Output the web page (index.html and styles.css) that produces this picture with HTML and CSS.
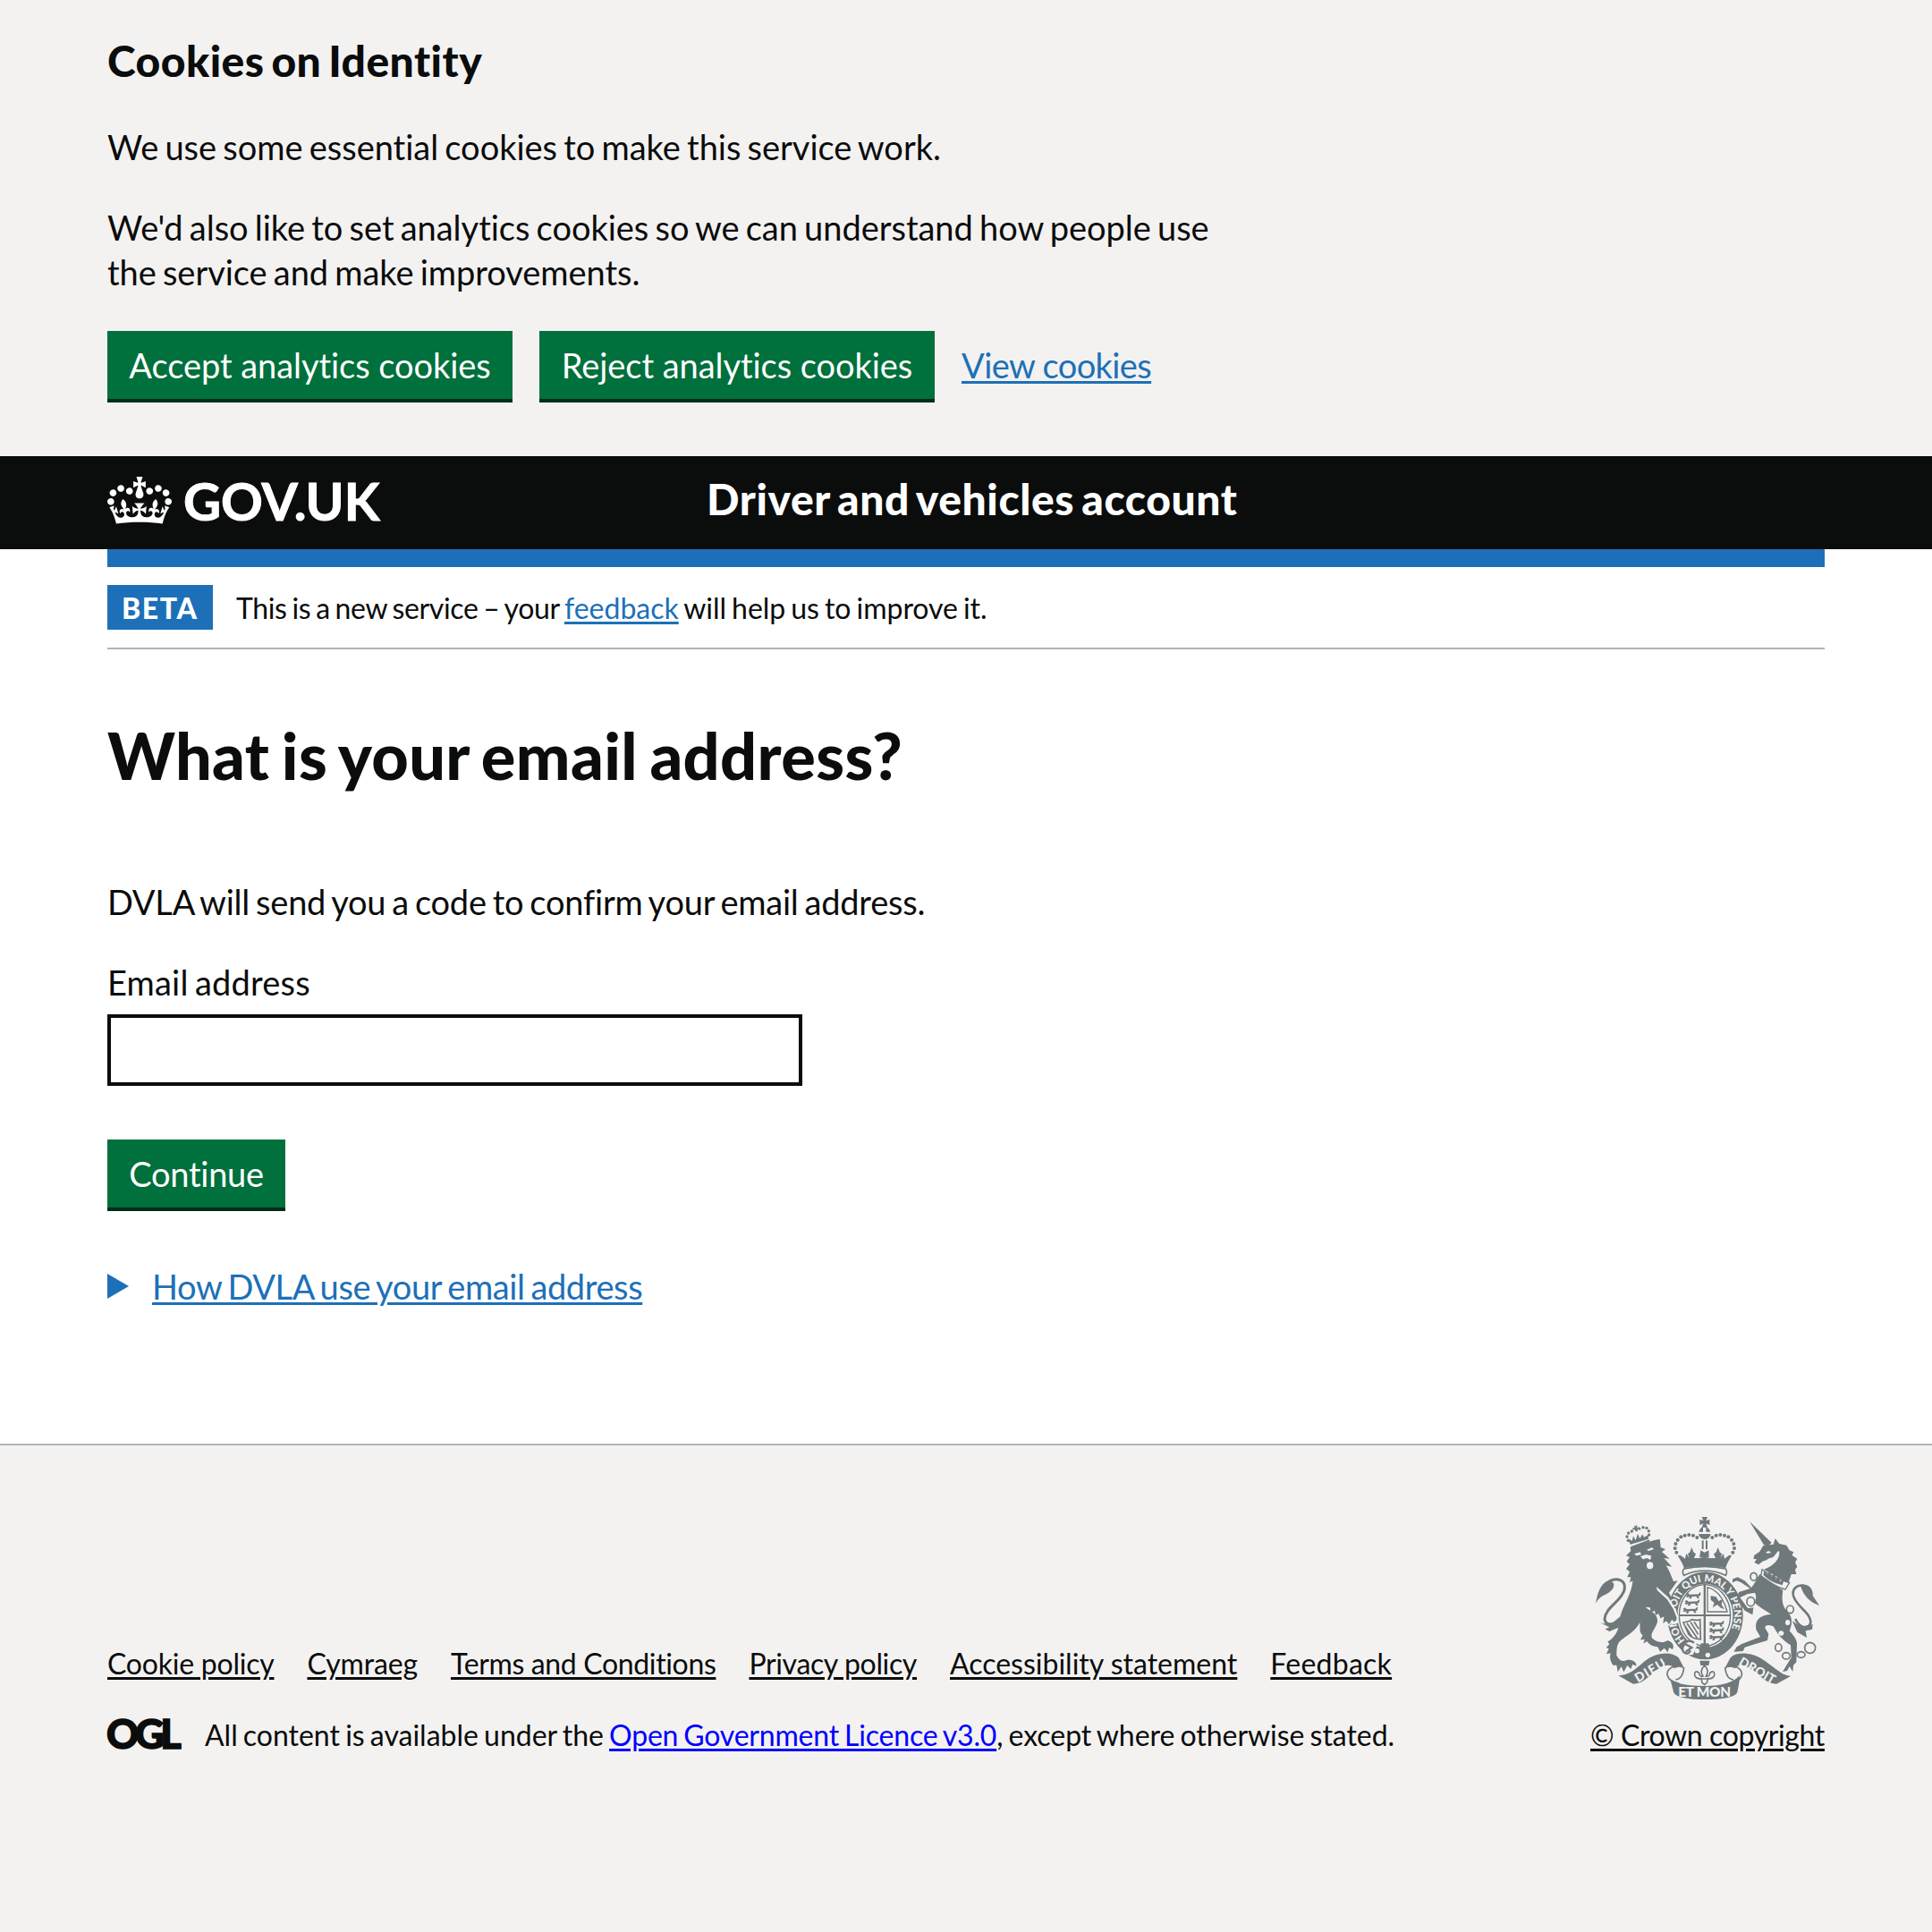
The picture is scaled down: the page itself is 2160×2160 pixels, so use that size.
FILE: index.html
```html
<!DOCTYPE html>
<html lang="en">
<head>
<meta charset="utf-8">
<title>What is your email address?</title>
<link rel="stylesheet" href="styles.css">
</head>
<body>
<section class="cookie-banner" aria-label="Cookies on Identity">
  <div class="container">
    <h2 class="cookie-banner__heading">Cookies on Identity</h2>
    <p class="cookie-banner__text">We use some essential cookies to make this service work.</p>
    <p class="cookie-banner__text">We'd also like to set analytics cookies so we can understand how people use<br><span class="cookie-banner__last">the service and make improvements.</span></p>
    <div class="button-group">
      <button class="button button--accept" type="button">Accept analytics cookies</button>
      <button class="button button--reject" type="button">Reject analytics cookies</button>
      <a class="link button-group__link" href="#">View cookies</a>
    </div>
  </div>
</section>

<header class="header">
  <div class="container header__container">
    <a class="header__logo" href="#">
      <svg class="header__crown" viewBox="0 0 132 97" aria-hidden="true"><path fill="currentColor" fill-rule="evenodd" d="M25 30.2c3.5 1.5 7.7-.2 9.1-3.7 1.5-3.6-.2-7.8-3.9-9.2-3.6-1.4-7.6.3-9.1 3.9-1.4 3.5.3 7.5 3.9 9zM9 39.5c3.6 1.5 7.8-.2 9.2-3.7 1.5-3.6-.2-7.8-3.9-9.1-3.6-1.5-7.6.2-9.1 3.8-1.4 3.5.3 7.5 3.8 9zM4.4 57.2c3.5 1.5 7.7-.2 9.1-3.8 1.5-3.6-.2-7.7-3.9-9.1-3.5-1.5-7.6.3-9.1 3.8-1.4 3.5.3 7.6 3.9 9.1zm38.3-21.4c3.5 1.5 7.7-.2 9.1-3.8 1.5-3.6-.2-7.7-3.9-9.1-3.6-1.5-7.6.3-9.1 3.8-1.3 3.6.4 7.7 3.9 9.1zm64.4-5.6c-3.6 1.5-7.8-.2-9.1-3.7-1.5-3.6.2-7.8 3.8-9.2 3.6-1.4 7.7.3 9.2 3.9 1.3 3.5-.4 7.5-3.9 9zm15.9 9.3c-3.6 1.5-7.7-.2-9.1-3.7-1.5-3.6.2-7.8 3.7-9.1 3.6-1.5 7.7.2 9.2 3.8 1.5 3.5-.3 7.5-3.8 9zm4.7 17.7c-3.6 1.5-7.8-.2-9.2-3.8-1.5-3.6.2-7.7 3.9-9.1 3.6-1.5 7.7.3 9.2 3.8 1.3 3.5-.4 7.6-3.9 9.1zM89.3 35.8c-3.6 1.5-7.8-.2-9.2-3.8-1.4-3.6.2-7.7 3.9-9.1 3.6-1.5 7.7.3 9.2 3.8 1.4 3.6-.3 7.7-3.9 9.1zM69.7 17.7l8.9 4.7V9.3l-8.9 2.8c-.2-.3-.5-.6-.9-.9L72.4 0H59.6l3.5 11.2c-.3.3-.6.5-.9.9l-8.8-2.8v13.1l8.8-4.7c.3.3.6.7.9.9l-5 15.4v.1c-.2.8-.4 1.6-.4 2.4 0 4.1 3.1 7.5 7 8.1h.2c.3 0 .7.1 1 .1.4 0 .7 0 1-.1h.2c4-.6 7.1-4.1 7.1-8.1 0-.8-.1-1.7-.4-2.4V34l-5.1-15.4c.4-.2.7-.6 1-.9zM66 92.8c16.9 0 32.8 1.1 47.1 3.2 4-16.9 8.9-26.7 14-33.5l-9.6-3.4c1 4.9 1.1 7.2 0 10.2-1.5-1.4-3-4.3-4.2-8.7L108.6 76c2.8-2 5-3.2 7.5-3.3-4.4 9.4-10 11.9-13.6 11.2-4.3-.8-6.3-4.6-5.6-7.9 1-4.7 5.7-5.9 8-.5 4.3-8.7-3-11.4-7.6-8.8 7.1-7.2 7.9-13.5 2.1-21.1-8 6.1-8.1 12.3-4.5 20.8-4.7-5.4-12.1-2.5-9.5 6.2 3.4-5.2 7.9-2 7.2 3.1-.6 4.3-6.4 7.8-13.5 7.2-10.3-.9-10.9-8-11.2-13.8 2.5-.5 7.1 1.8 11 7.3L80.2 60c-4.1 4.4-8 5.3-12.3 5.4 1.4-4.4 8-11.6 8-11.6H55.5s6.4 7.2 7.9 11.6c-4.2-.1-8-1-12.3-5.4l1.4 16.4c3.9-5.5 8.5-7.7 10.9-7.3-.3 5.8-.9 12.8-11.1 13.8-7.2.6-12.9-2.9-13.5-7.2-.7-5 3.8-8.3 7.1-3.1 2.7-8.7-4.6-11.6-9.4-6.2 3.7-8.5 3.6-14.7-4.6-20.8-5.8 7.6-5 13.9 2.2 21.1-4.7-2.6-11.9.1-7.7 8.8 2.3-5.5 7.1-4.2 8.1.5.7 3.3-1.3 7.1-5.7 7.9-3.5.7-9-1.8-13.5-11.2 2.5.1 4.7 1.3 7.5 3.3l-4.7-15.4c-1.2 4.4-2.7 7.2-4.3 8.7-1.1-3-.9-5.3 0-10.2l-9.5 3.4c5 6.9 9.9 16.7 14 33.5 14.8-2.1 30.8-3.2 47.7-3.2z"/></svg>
      <span class="header__logotype">GOV.UK</span>
    </a>
    <a class="header__service" href="#">Driver and vehicles account</a>
  </div>
</header>

<div class="container">
  <div class="brand-bar"></div>
  <div class="phase-banner">
    <strong class="phase-banner__tag">BETA</strong>
    <span class="phase-banner__text"><span class="phase-banner__lead">This is a new service – your </span><a class="link" href="#">feedback</a><span class="phase-banner__rest"> will help us to improve it.</span></span>
  </div>
  <main class="main">
    <h1 class="heading">What is your email address?</h1>
    <p class="intro">DVLA will send you a code to confirm your email address.</p>
    <label class="label" for="email">Email address</label>
    <input class="input" id="email" type="email">
    <button class="button button--continue" type="button">Continue</button>
    <div class="details">
      <svg class="details__arrow" viewBox="0 0 24 28" aria-hidden="true"><path fill="currentColor" d="M0 0l24 14L0 28z"/></svg>
      <a class="link details__text" href="#">How DVLA use your email address</a>
    </div>
  </main>
</div>

<footer class="footer">
  <div class="container footer__container">
    <div class="footer__meta">
      <nav class="footer__links">
        <a class="footer__link ls-cookie" href="#">Cookie policy</a>
        <a class="footer__link ls-cymraeg" href="#">Cymraeg</a>
        <a class="footer__link ls-terms" href="#">Terms and Conditions</a>
        <a class="footer__link ls-privacy" href="#">Privacy policy</a>
        <a class="footer__link" href="#">Accessibility statement</a>
        <a class="footer__link ls-feedback" href="#">Feedback</a>
      </nav>
      <div class="licence">
        <span class="licence__logo">OGL</span>
        <span class="licence__text">All content is available under the <a class="licence__link" href="#">Open Government Licence v3.0</a><span class="licence__rest">, except where otherwise stated.</span></span>
      </div>
    </div>
    <div class="copyright">
      <svg class="copyright__crest" viewBox="72 48 750 612" aria-hidden="true">
        <defs>
          <path id="motto" d="M372 462A98 113 0 1 1 503 463"/>
          <g id="passant"><path d="M0 4l8-4 5 5 30-1 4-6 4 2-3 10-6 1 4 7h-7l-4-7-14 1-3 7h-7l2-8-7 4-6-4 5-3z"/></g>
        </defs>
        <g class="crest-ink">
          <!-- lion -->
          <path d="M188 150L268 126 287 122 290 150 306 156 294 165 320 188 301 186 328 215 308 211C318 225 325 245 333 264L347 262 318 302 338 342 348 372 350 396 338 400 328 392 318 408 309 397 298 404 301 382 290 388 283 372 273 377 270 362 256 368 255 352 238 350C262 368 281 372 279 400 272 425 252 440 262 455 280 470 300 472 312 462 330 466 337 480 330 492L318 486 314 502 302 488 288 500 280 484C262 482 250 475 245 465L232 472 236 458 222 460 230 445C216 435 222 420 220 402 205 430 180 445 165 455 140 470 143 490 142 512 150 530 165 535 175 528 195 525 210 535 208 548L196 542 190 558 178 546 166 568 158 550 146 568 142 545 130 545C120 530 118 515 122 505L108 508 116 490 107 486 118 475 112 466C125 460 140 445 148 420 150 390 158 365 168 345 185 310 195 285 196 262L186 268 190 250 178 250 186 232 174 222 186 206 176 198 186 182 174 178 190 162z"/>
          <path d="M72 338C78 300 90 268 118 260 138 266 138 285 118 300 105 310 85 312 72 338z"/>
          <path class="line" stroke-width="9" d="M116 264C145 250 175 260 168 292 160 330 105 350 102 390 104 412 130 415 158 388"/>
          <path d="M88 403L120 410 156 380 152 408 160 414 118 432 104 424 118 418z"/>
          <path d="M189 148L252 124 254 130 192 154zM188 140L180 120 194 128 198 112 206 126 213 104 220 120 229 106 234 116 248 108 249 122z"/>
          <path d="M201 79l10-3-1 8 8-3 2 8-8-1 1 9-8-1-1-6-7 2-1-8 7 1z"/>
          <g><circle cx="181" cy="127" r="5"/><circle cx="177" cy="114" r="5"/><circle cx="182" cy="102" r="5"/><circle cx="193" cy="96" r="5"/><circle cx="219" cy="88" r="4"/><circle cx="231" cy="83" r="5"/><circle cx="243" cy="85" r="5"/><circle cx="250" cy="95" r="5"/><circle cx="251" cy="108" r="5"/></g>
          <!-- central crown -->
          <path d="M428 48h19l-5 13 12-5v19l-12-5 5 13h-19l5-13-12 5V56l12 5zM418 98q4-14 14-16v16zM442 82q12 4 14 16h-14zM417 105h41q-3 17-20 18-17-1-21-18zM428 127h6v29h-6zM441 127h6v29h-6z"/>
          <g><circle cx="412" cy="117" r="6"/><circle cx="399" cy="110" r="6"/><circle cx="385" cy="108" r="6"/><circle cx="371" cy="110" r="6"/><circle cx="358" cy="115" r="6"/><circle cx="347" cy="125" r="6"/><circle cx="340" cy="138" r="6"/><circle cx="338" cy="153" r="6"/><circle cx="343" cy="167" r="6"/><circle cx="463" cy="117" r="6"/><circle cx="476" cy="110" r="6"/><circle cx="490" cy="108" r="6"/><circle cx="504" cy="110" r="6"/><circle cx="517" cy="115" r="6"/><circle cx="528" cy="125" r="6"/><circle cx="535" cy="138" r="6"/><circle cx="537" cy="153" r="6"/><circle cx="532" cy="167" r="6"/></g>
          <path d="M347 177L356 176 372 188 376 170 386 186 381 172 388 166 394 150 400 166 408 172 402 186 424 186 432 180 420 185 424 160 437 167 451 160 452 185 440 180 450 186 474 186 468 172 476 166 482 150 488 166 495 172 490 186 500 170 504 188 520 176 528 177C515 200 510 210 508 220Q437 206 368 220C366 208 358 196 347 177z"/>
          <path class="line" stroke-width="5" d="M368 222Q437 206 508 222 515 232 508 244 475 228 437 228 400 228 368 244 360 232 368 222z"/>
          <!-- garter and shield -->
          <path fill-rule="evenodd" d="M439 232a127 147 0 1 0 .1 0zM439 272a93 107 0 1 1-.1 0z"/>
          <ellipse class="line" cx="438" cy="378" rx="86" ry="103" stroke-width="4"/>
          <path d="M434 275h7v206h-7zM352 375h172v6H352zM425 472h26l6 22h-38z"/>
          <use href="#passant" x="374" y="303"/><use href="#passant" x="370" y="327"/><use href="#passant" x="364" y="352"/>
          <use href="#passant" x="452" y="398"/><use href="#passant" x="452" y="420"/><use href="#passant" x="452" y="443"/>
          <path class="line" stroke-width="4" d="M447 284q48 12 66 82h-66z"/>
          <path d="M458 312l18 4 8 14 14-6-4 18 10 16-14-6-10-10-16 10 6-16-12-10z"/>
          <path class="line" stroke-width="5" d="M366 402q22-4 28-10 20 4 28 0l2 66q-28 0-40-16zM378 404l34 50M390 400l26 42M402 400l16 24M372 414l24 38"/>
        </g>
        <text class="crest-text" font-size="34"><textPath href="#motto">HONI SOIT QUI MAL Y PENSE</textPath></text>
        <g class="crest-gap">
          <path d="M276 282L316 318 336 350 350 382 350 402 338 408 326 404 318 414 306 400 296 404 290 380z"/>
          <circle cx="412" cy="497" r="8"/><circle cx="448" cy="511" r="8"/>
          <path d="M362 480l18-18 22-2 10 20-14 30-26 2z"/>
        </g>
        <g class="crest-ink">
          <path d="M272 288L312 325 332 356 344 386 342 396 334 400 328 392 318 408 309 397 298 404 301 382 290 388 283 372 270 362z"/>
          <path class="line" stroke-width="7" d="M402 470q-20-14-30 2-14 14-6 28 14 14 24-4M372 474l22 12-20 14"/>
          <!-- unicorn -->
          <path d="M588 63L662 134 650 146 636 142z"/>
          <path d="M668 140L674 120 688 138 712 143 722 160 736 166 730 176 748 188 741 200 748 215 741 224 745 240 728 240 718 270 636 224C668 212 690 190 688 164 682 158 676 176 666 184 650 184 645 196 634 196L618 208 604 200 612 190 601 188 604 176 622 164 634 144z"/>
          <path d="M622 240L700 294C694 330 700 350 715 365 735 385 730 410 722 430 735 445 748 460 747 475L745 535 735 545 733 567 722 549 714 564 699 567 712 545 728 520 726 478C700 462 680 440 668 415 650 408 640 410 640 420L652 440 648 462 600 476 572 485 566 498 535 500 545 484 562 474 624 450 610 425C605 390 625 378 660 374 640 360 620 350 605 335 612 320 610 310 606 302L582 306 556 318 582 354 601 352 598 376 572 362 545 322 552 300 590 288 560 268 545 262 530 268 532 256 548 250 572 262 594 285C607 270 612 255 622 240z"/>
          <path class="line" stroke-width="4" d="M630 224Q674 256 722 268L708 291Q660 276 626 246z"/>
          <path d="M634 242l4-15 10 14 8-12 6 20 10-14 4 22 12-12 2 20 14-8-6 20q-40-10-64-35z"/>
          <path d="M758 276C788 268 802 292 800 312L822 345C795 335 770 318 758 276z"/>
          <path class="line" stroke-width="8" d="M770 278C745 275 730 290 735 312 745 350 795 370 793 402 785 428 755 420 742 390"/>
          <path d="M731 396L760 416 800 408 798 425 776 430 780 453 748 434z"/>
          <g class="line" stroke-width="5"><ellipse cx="602" cy="248" rx="11" ry="13"/><ellipse cx="724" cy="358" rx="12" ry="13"/><ellipse cx="685" cy="486" rx="11" ry="13"/><ellipse cx="711" cy="514" rx="13" ry="11"/><ellipse cx="761" cy="510" rx="13" ry="10"/><circle cx="791" cy="487" r="18"/><ellipse cx="592" cy="332" rx="13" ry="15"/></g>
          <!-- ribbons -->
          <path d="M148 580C196 578 215 545 250 522 280 502 328 498 350 520L369 556Q350 546 336 556C318 532 285 552 262 572 242 592 225 606 198 608z"/>
          <path d="M726 582C690 578 665 545 626 522 596 504 546 498 524 520L505 556Q524 546 540 556C556 532 590 552 613 572 633 592 652 606 678 608z"/>
          <path d="M322 592Q350 615 437 615 525 615 554 580 556 600 546 638 530 660 437 660 350 660 334 638z"/>
          <path class="line" stroke-width="5" d="M350 546Q310 552 312 578 318 600 352 606M368 552Q364 592 340 594M524 546Q564 552 562 578 556 600 522 606M506 552Q510 592 534 594"/>
          <path d="M421 530h33l-3 16h-27z"/>
          <path class="line" stroke-width="5" d="M437 546q18 18 5 36 12 2 14-12 16-10 14 10-8 14-22 10l-3 14-8 6-8-6-3-14q-14 4-22-10-2-20 14-10 2 14 14 12-13-18 5-36zM419 591h36"/>
        </g>
        <g class="crest-gap">
          <path d="M201 172l20-6 4 8-16 4zM243 158l18-8 6 6-18 6zM222 180l18-6 18 4-2 14-12-6-14 4z"/><ellipse cx="254" cy="211" rx="11" ry="12"/>
          <ellipse cx="716" cy="402" rx="8" ry="9"/><ellipse cx="694" cy="438" rx="9" ry="8"/><path d="M642 166l12-4 6 6-12 2z"/>
        </g>
        <g class="crest-text">
          <text font-size="42" textLength="112" transform="translate(214 604) rotate(-31)">DIEU</text>
          <text font-size="42" textLength="134" transform="translate(549 542) rotate(30)">DROIT</text>
          <text font-size="46" textLength="176" x="349" y="652">ET MON</text>
        </g>
      </svg>
      <a class="footer__link ls-crown" href="#">© Crown copyright</a>
    </div>
  </div>
</footer>
</body>
</html>
```
FILE: styles.css
```css
*, *::before, *::after { box-sizing: border-box; }
body {
  margin: 0;
  display: flex;
  flex-direction: column;
  min-height: 2160px;
  background: #fff;
  color: #0b0c0c;
  font: 400 38px/50px Lato, "Noto Sans", sans-serif;
  font-kerning: normal;
}
h1, h2, p { margin: 0; }
.container { width: 1920px; margin: 0 auto; }
.link {
  color: #1d70b8;
  text-decoration: underline 3px;
  text-underline-offset: 3px;
}

.cookie-banner { height: 510px; padding-top: 38px; background: #f3f2f1; }
.cookie-banner__heading { margin-bottom: 41px; font-size: 48px; font-weight: 900; line-height: 60px; letter-spacing: .48px; word-spacing: -4px; }
.cookie-banner__text { margin-bottom: 40px; letter-spacing: -.02px; word-spacing: -2.5px; }
.cookie-banner__last { letter-spacing: -.04px; }
.button-group { display: flex; align-items: flex-start; padding-top: 1px; }
.button {
  display: block;
  height: 76px;
  padding: 1px 24px 0;
  border: 0;
  background: #00703c;
  box-shadow: 0 4px 0 #002d18;
  color: #fff;
  font: inherit;
  line-height: 75px;
  white-space: nowrap;
}
.button--accept { width: 453px; margin-right: 30px; letter-spacing: -.05px; }
.button--reject { width: 442px; margin-right: 30px; letter-spacing: -.05px; }
.button-group__link { padding-top: 1px; line-height: 75px; letter-spacing: -.6px; }

.header { height: 104px; background: #0b0c0c; color: #fff; }
.header__container { display: grid; grid-template-columns: 670px auto; }
.header a { color: inherit; text-decoration: none; }
.header__logo { display: flex; padding-top: 23px; }
.header__crown { width: 72px; height: 53px; }
.header__logotype { margin-left: 13px; font-size: 58px; font-weight: 700; -webkit-text-stroke: 1px currentColor; line-height: 53px; }
.header__service { padding-top: 18px; font-size: 48px; font-weight: 900; line-height: 60px; letter-spacing: .6px; word-spacing: -4px; }

.brand-bar { height: 20px; background: #1d70b8; }
.phase-banner {
  display: flex;
  gap: 26px;
  height: 92px;
  padding: 20px 0;
  border-bottom: 2px solid #b1b4b6;
  font-size: 32px;
  line-height: 51px;
}
.phase-banner__tag { width: 118px; height: 50px; padding-left: 16px; background: #1d70b8; color: #fff; font-weight: 900; letter-spacing: 1.6px; }
.phase-banner__text { white-space: pre; }
.phase-banner__lead { letter-spacing: -.35px; word-spacing: -2px; }
.phase-banner__rest { letter-spacing: -.05px; word-spacing: -2px; }

.main { padding-top: 78px; }
.heading { margin-bottom: 99px; font-size: 72px; font-weight: 900; line-height: 80px; letter-spacing: .37px; word-spacing: -4px; }
.intro { margin-bottom: 40px; letter-spacing: -.23px; word-spacing: -2.5px; }
.label { display: block; margin-bottom: 11px; letter-spacing: .19px; word-spacing: -2.5px; }
.input { display: block; width: 777px; height: 80px; margin-bottom: 60px; border: 4px solid #0b0c0c; border-radius: 0; background: #fff; }
.button--continue { width: 199px; letter-spacing: -.25px; }
.details { display: flex; gap: 26px; margin-top: 63px; color: #1d70b8; }
.details__arrow { width: 24px; height: 28px; margin-top: 11px; }
.details__text { letter-spacing: -.38px; word-spacing: -2.5px; }

.footer { flex: 1; margin-top: 151px; border-top: 2px solid #b1b4b6; background: #f3f2f1; font-size: 32px; line-height: 40px; }
.footer__container { display: flex; justify-content: space-between; align-items: flex-end; height: 344px; }
.footer__links { display: flex; gap: 37px; margin-bottom: 40px; }
.footer__link { color: inherit; text-decoration: underline 3px; text-underline-offset: 3px; white-space: nowrap; }
.ls-cookie { letter-spacing: -.23px; }
.ls-cymraeg { letter-spacing: -.14px; }
.ls-terms { letter-spacing: -.35px; }
.ls-privacy { letter-spacing: -.36px; }
.ls-feedback { letter-spacing: .25px; }
.ls-crown { letter-spacing: -.38px; }
.licence { display: flex; white-space: pre; }
.licence__logo { width: 109px; margin-left: -1px; font-size: 45px; font-weight: 900; -webkit-text-stroke: 1.5px currentColor; letter-spacing: -4.4px; line-height: 36px; }
.licence__text { margin-left: 1px; letter-spacing: -.01px; word-spacing: -2px; }
.licence__link { color: #00f; text-decoration: underline 3px; text-underline-offset: 3px; letter-spacing: -.19px; }
.licence__rest { letter-spacing: -.04px; }
.copyright { display: flex; flex-direction: column; width: 262px; }
.copyright__crest { width: 250px; height: 204px; margin: 0 0 20px 6px; }
.crest-ink { fill: #6f787b; }
.crest-ink .line { fill: none; stroke: #6f787b; }
.crest-gap, .crest-text { fill: #f3f2f1; }
.crest-text { font-family: Lato, sans-serif; font-weight: 900; }
```
